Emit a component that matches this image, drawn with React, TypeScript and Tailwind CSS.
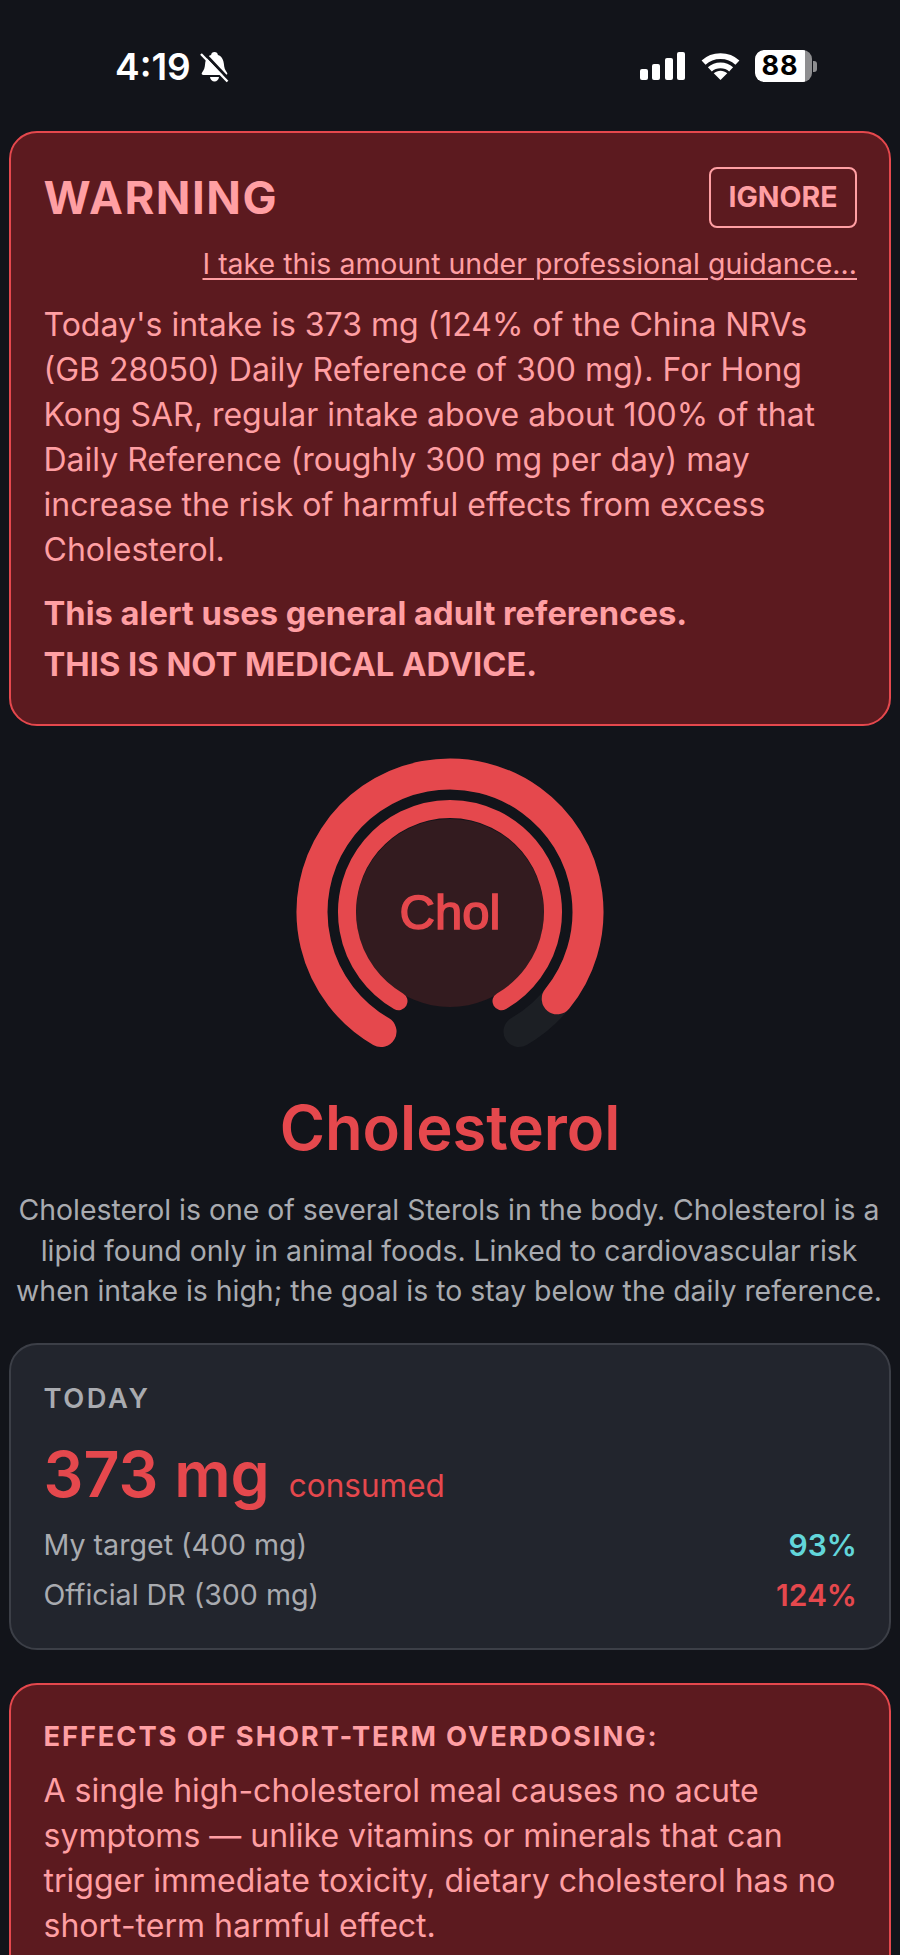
import React from "react";

const RED = "#e5484d";

function arc(r: number, fromDeg: number, toDeg: number, cx = 160, cy = 160) {
  const p = (d: number) => {
    const a = ((d - 90) * Math.PI) / 180;
    return `${(cx + r * Math.cos(a)).toFixed(2)} ${(cy + r * Math.sin(a)).toFixed(2)}`;
  };
  const large = toDeg - fromDeg > 180 ? 1 : 0;
  return `M ${p(fromDeg)} A ${r} ${r} 0 ${large} 1 ${p(toDeg)}`;
}

function Gauge() {
  return (
    <div className="relative h-[320px] w-[320px]">
      <svg width="320" height="320" viewBox="0 0 320 320" fill="none">
        <circle cx="160" cy="161" r="94" fill="#331b1f" />
        <path d={arc(138, 210, 510)} stroke="#1c1f24" strokeWidth="31" strokeLinecap="round" />
        <path d={arc(138, 210, 489)} stroke={RED} strokeWidth="31" strokeLinecap="round" />
        <path d={arc(103, 210, 510)} stroke={RED} strokeWidth="18" strokeLinecap="round" />
      </svg>
      <div className="absolute inset-0 flex items-center justify-center pt-[2px] font-['Liberation_Sans',sans-serif] text-[49px] text-[#e5484d] [-webkit-text-stroke:1.5px_#e5484d]">Chol</div>
    </div>
  );
}

function StatusBar() {
  return (
    <div className="flex h-[131px] items-start justify-between pl-[115px] pr-[83px] pt-[47px] text-white">
      <div className="flex items-center gap-[8px]">
        <span className="text-[37px] leading-[40px] font-semibold">4:19</span>
        <svg width="31" height="32" viewBox="0 0 30 32" fill="white">
          <path d="M15 1c2 0 3.200 1.300 3.400 3 4 1.300 5.600 4.800 6 9 .3 3.600 1 6 3 8.500 1 1.300.3 2.500-1.400 2.500H4c-1.700 0-2.400-1.200-1.400-2.500 2-2.500 2.700-4.900 3-8.500.4-4.200 2-7.700 6-9 .2-1.700 1.400-3 3.400-3z" />
          <path d="M10.500 26h9c-.4 2.800-2.200 4.500-4.500 4.500s-4.100-1.700-4.500-4.500z" />
          <path d="M3.500 1 L29 28" stroke="#12141a" strokeWidth="3" />
          <path d="M1.500 3 L28 30.500" stroke="white" strokeWidth="2.400" />
        </svg>
      </div>
      <div className="flex items-center pt-[3px]">
        <svg width="45" height="28" viewBox="0 0 45 28" fill="white">
          <rect x="0" y="17" width="8" height="11" rx="2" />
          <rect x="12" y="12" width="8" height="16" rx="2" />
          <rect x="25" y="6" width="8" height="22" rx="2" />
          <rect x="37" y="0" width="8" height="28" rx="2" />
        </svg>
        <svg className="ml-[16px]" width="39" height="29" viewBox="0 0 40 30" fill="none" stroke="white" strokeWidth="6">
          <path d="M2.500 11 C12 2 28 2 37.500 11" />
          <path d="M9 18 C15 12.500 25 12.500 31 18" />
          <path d="M13 22 L20 29 L27 22 C23 18.500 17 18.500 13 22 Z" fill="white" stroke="none" />
        </svg>
        <div className="ml-[15px] flex items-center">
          <div className="flex h-[32px] w-[57px] items-center overflow-hidden rounded-[9px] bg-[#8e8e90]">
            <div className="flex h-full w-[50px] items-center justify-center rounded-l-[9px] bg-white text-[27px] font-bold tracking-[1px] text-black">88</div>
          </div>
          <div className="ml-[1px] h-[11px] w-[4px] rounded-r-[3px] bg-[#8e8e90]" />
        </div>
      </div>
    </div>
  );
}

export default function App() {
  return (
    <div
      className="h-[1955px] overflow-hidden bg-[#12141a] px-[9px] text-[32px]"
      style={{ fontFamily: "Inter, 'Liberation Sans', sans-serif" }}
    >
      <div className="-mx-[9px]">
        <StatusBar />
      </div>

      <section className="rounded-[28px] border-2 border-[#e5484d] bg-[#5c1a1f] pl-[32.500px] pr-[32px] pt-[34px] pb-[34px] text-[#ff9fa3]">
        <div className="flex items-center justify-between">
          <h1 className="text-[45.500px] leading-[61px] font-bold tracking-[1.500px]">WARNING</h1>
          <button className="flex h-[61px] w-[148px] items-center justify-center rounded-[8px] border-2 border-[#ff9fa3] text-[28.500px] font-bold">IGNORE</button>
        </div>
        <p className="mt-[19px] text-right text-[28.500px] leading-[34px] underline underline-offset-[4px]">I take this amount under professional guidance...</p>
        <p className="mt-[21px] text-[32px] leading-[45px]">
          Today's intake is 373 mg (124% of the China NRVs (GB 28050) Daily Reference of 300 mg). For Hong Kong SAR, regular intake above about 100% of that Daily Reference (roughly 300 mg per day) may increase the risk of harmful effects from excess Cholesterol.
        </p>
        <p className="mt-[16px] text-[32.700px] leading-[51px] font-bold">
          This alert uses general adult references.
          <br />
          THIS IS NOT MEDICAL ADVICE.
        </p>
      </section>

      <div className="mt-[26px] flex justify-center">
        <Gauge />
      </div>

      <h2 className="mt-[18px] text-center text-[61.500px] leading-[76px] font-semibold text-[#e5484d]">Cholesterol</h2>

      <p className="-ml-[2px] mt-[24px] text-center text-[28.400px] leading-[40.500px] text-[#a9abb0] whitespace-nowrap">
        Cholesterol is one of several Sterols in the body. Cholesterol is a
        <br />
        lipid found only in animal foods. Linked to cardiovascular risk
        <br />
        when intake is high; the goal is to stay below the daily reference.
      </p>

      <section className="mt-[31px] h-[307px] rounded-[28px] border-2 border-[#3c3f47] bg-[#22252d] pl-[32.500px] pr-[32px] pt-[38px]">
        <div className="text-[27.300px] leading-[32px] font-semibold tracking-[2.600px] text-[#a9abb0]">TODAY</div>
        <div className="mt-[17px] flex items-baseline gap-[19px] text-[#e5484d]">
          <span className="text-[62.700px] leading-[84px] font-semibold">373 mg</span>
          <span className="text-[31.500px]">consumed</span>
        </div>
        <div className="mt-[4px] flex justify-between text-[28.600px] leading-[50px] text-[#a9abb0]">
          <span>My target (400 mg)</span>
          <span className="text-[30px] font-semibold text-[#62d6da]">93%</span>
        </div>
        <div className="flex justify-between text-[28.600px] leading-[50px] text-[#a9abb0]">
          <span>Official DR (300 mg)</span>
          <span className="text-[30px] font-semibold text-[#e5484d]">124%</span>
        </div>
      </section>

      <section className="mt-[33px] h-[320px] rounded-[28px] border-2 border-[#e5484d] bg-[#5c1a1f] pl-[32.500px] pr-[32px] pt-[36px] text-[#ff9fa3]">
        <div className="text-[27.300px] leading-[32px] font-bold tracking-[1.900px]">EFFECTS OF SHORT-TERM OVERDOSING:</div>
        <p className="mt-[15px] text-[32px] leading-[45px]">
          A single high-cholesterol meal causes no acute symptoms — unlike vitamins or minerals that can trigger immediate toxicity, dietary cholesterol has no short-term harmful effect.
        </p>
      </section>
    </div>
  );
}
